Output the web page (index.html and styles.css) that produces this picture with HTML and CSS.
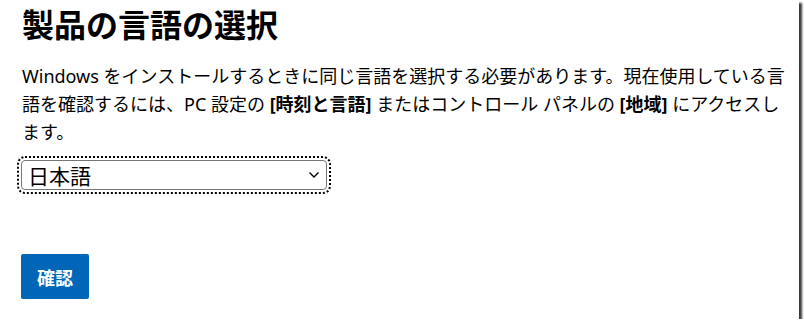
FILE: index.html
```html
<!DOCTYPE html>
<html lang="ja">
<head>
    <meta charset="utf-8">
    <title>製品の言語の選択</title>
    <link rel="stylesheet" href="styles.css">
</head>
<body>
    <div class="page">
        <h1 class="title">製品の言語の選択</h1>
        <p class="intro">Windows をインストールするときに同じ言語を選択する必要があります。現在使用している言語を確認するには、PC 設定の <b>[時刻と言語]</b> またはコントロール パネルの <b>[地域]</b> にアクセスします。</p>

        <div class="lang-select">
            <span class="lang-value">日本語</span>
            <svg class="chevron" width="12" height="8" viewBox="0 0 12 8">
                <path d="M1.5 1.5 L6 6 L10.5 1.5" fill="none" stroke="#000" stroke-width="1.4"/>
            </svg>
        </div>

        <button class="confirm-btn">確認</button>
    </div>
</body>
</html>
```

FILE: styles.css
```css
html, body {
    margin: 0;
    background-color: #fff;
}
body {
    font-family: "Noto Sans", "Noto Sans CJK JP", sans-serif;
    color: #000;
}
.page {
    width: 777px;
    height: 319px;
    padding-left: 22px;
    box-sizing: content-box;
    background-color: #fff;
    box-shadow: 3px 3px 2px #3a3a3a;
    overflow: hidden;
}
.title {
    font-family: "Noto Sans CJK JP", sans-serif;
    font-size: 32px;
    font-weight: 700;
    line-height: 40px;
    margin: 3px 0 0 0;
}
.intro {
    font-size: 18px;
    line-height: 28px;
    margin: 19px 0 0 0;
    width: 768px;
}
.intro b {
    font-weight: 700;
}
.lang-select {
    width: 306px;
    height: 30px;
    margin: 14px 0 0 -1px;
    box-sizing: border-box;
    border: 1px solid #767676;
    border-radius: 4px;
    outline: 2px dotted #000;
    outline-offset: 2px;
    display: flex;
    align-items: center;
    justify-content: space-between;
    padding: 0 6px 0 6px;
}
.lang-value {
    font-family: "Noto Sans CJK JP", sans-serif;
    font-size: 21px;
}
.chevron {
    display: block;
}
.confirm-btn {
    display: block;
    margin: 64px 0 0 -1px;
    width: 68px;
    height: 45px;
    border: none;
    border-radius: 2px;
    background-color: #0067b8;
    color: #fff;
    font-family: "Noto Sans CJK JP", sans-serif;
    font-size: 18px;
    font-weight: 700;
    padding: 0;
}
```
